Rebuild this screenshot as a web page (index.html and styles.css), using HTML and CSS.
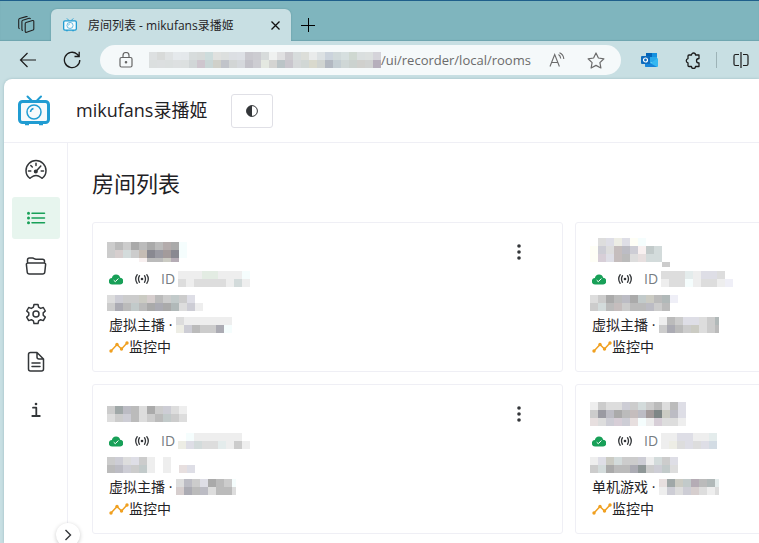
FILE: index.html
```html
<!DOCTYPE html>
<html lang="zh-CN">
<head>
    <meta charset="UTF-8">
    <meta name="viewport" content="width=device-width, initial-scale=1.0">
    <title>房间列表 - mikufans录播姬</title>
    <link rel="stylesheet" href="styles.css">
    <script src="script.js" defer></script>
</head>
<body>
    <!-- Shared icons -->
    <svg class="sprite" aria-hidden="true">
        <symbol id="tv" viewBox="0 0 32 32">
            <path d="M9.500 1.500l4.500 4.500M23 1.500l-4.500 4.500" fill="none" stroke="currentColor" stroke-width="2" stroke-linecap="round"/>
            <rect x="1.500" y="6.500" width="29" height="21" rx="3" fill="#f5fafc" stroke="currentColor" stroke-width="3"/>
            <path d="M7 29h4M21 29h4" stroke="currentColor" stroke-width="2.500"/>
            <circle cx="16" cy="17" r="7" fill="none" stroke="currentColor" stroke-width="1.500"/>
            <path d="M12.500 17a4 4 0 0 1 3-3.500" fill="none" stroke="currentColor" stroke-width="1.500"/>
        </symbol>
        <symbol id="cloud" viewBox="0 0 14 11">
            <path d="M3.300 10.500A3.200 3.200 0 0 1 2.900 4a4.200 4.200 0 0 1 8.200-.2A3.300 3.300 0 0 1 10.800 10.500z" fill="#18a058"/>
            <path d="M4.700 6.200l1.600 1.500 3.100-3.200" fill="none" stroke="#fff" stroke-width="1"/>
        </symbol>
        <symbol id="live" viewBox="0 0 14 12">
            <g fill="none" stroke="#333639" stroke-width="1.300" stroke-linecap="round">
                <path d="M2.200 1.700q-3 4.300 0 8.600M4.500 2.700q-2 3.300 0 6.600M11.800 1.700q3 4.300 0 8.600M9.500 2.700q2 3.300 0 6.600"/>
            </g>
            <circle cx="7" cy="6" r="1.300" fill="#333639"/>
        </symbol>
        <symbol id="trend" viewBox="0 0 20 12">
            <path d="M2 10l6-6.500 4.500 4.500L18 2" fill="none" stroke="#f0a020" stroke-width="1.500"/>
            <g fill="#f0a020"><circle cx="2" cy="10" r="1.700"/><circle cx="8" cy="3.500" r="1.700"/><circle cx="12.500" cy="8" r="1.700"/><circle cx="18" cy="2" r="1.700"/></g>
        </symbol>
        <symbol id="dots" viewBox="0 0 4 16">
            <circle cx="2" cy="2" r="1.800"/><circle cx="2" cy="8" r="1.800"/><circle cx="2" cy="14" r="1.800"/>
        </symbol>
    </svg>

    <div class="tab-strip">
        <button class="workspaces" aria-label="Workspaces">
            <svg width="18" height="18" viewBox="0 0 18 18" fill="none" stroke="#222" stroke-width="1.100" stroke-linejoin="round">
                <path d="M9 6.500l6.500-2q1.300-.3 1.300 1v7.500q0 .8-.8 1.100l-6.300 2.200q-1.500.4-1.500-1V7.700q0-.9.800-1.200z"/>
                <path d="M13.500 3q-.3-1-1.400-.7L5.800 4.200q-.9.300-.9 1.200v8q0 1 1 1M10.500 1q-.4-.6-1.300-.4L2.600 2.500q-.9.300-.9 1.200v7.800q0 1 1 1.200"/>
            </svg>
        </button>
        <div class="tab">
            <svg class="favicon" width="14" height="14"><use href="#tv"/></svg>
            <span class="tab-title">房间列表 - mikufans录播姬</span>
            <button class="tab-close" aria-label="Close tab">
                <svg width="9" height="9" viewBox="0 0 9 9" stroke="#111" stroke-width="1.300"><path d="M.5.5l8 8M8.500.5l-8 8"/></svg>
            </button>
        </div>
        <button class="new-tab" aria-label="New tab">
            <svg width="14" height="14" viewBox="0 0 14 14" stroke="#000" stroke-width="1"><path d="M7.500 0v14M0 7.500h14"/></svg>
        </button>
    </div>

    <div class="toolbar">
        <button aria-label="Back">
            <svg width="18" height="16" viewBox="0 0 18 16" fill="none" stroke="#1b1b1b" stroke-width="1.200"><path d="M8.500 1L1.500 8l7 7M1.500 8H17"/></svg>
        </button>
        <button aria-label="Refresh">
            <svg width="18" height="18" viewBox="0 0 18 18" fill="none" stroke="#1b1b1b" stroke-width="1.300"><path d="M16.800 9A7.700 7.700 0 1 1 14.200 3.200L16 5M16.200.8V5.500H11.500"/></svg>
        </button>
        <div class="address">
            <svg width="14" height="16" viewBox="0 0 14 16" fill="none" stroke="#666" stroke-width="1.200"><rect x="1" y="5.500" width="12" height="9.500" rx="1.500"/><path d="M4 5.500V3.500a3 3 0 0 1 6 0v2"/><circle cx="7" cy="10.300" r=".7" fill="#666"/></svg>
            <svg class="mosaic" data-cells="dde0e1 d8dad9 dfe2e3 e5e9ec e4e8eb d7dcdc d6dad9 cddcdc e0e1df dcdfde dcdfe3 dde0e5 c9c8ce ccccd1 d7dbdb eff1f0 e0e0e1 cdcbcf d7dcdc dcded9 e9ebeb dce1e3 cbd3dc d0d9da d6dfdf cfd8d1 dadfdf dce0df d5d4da/dbdfdf dcdfe0 dbdfdf dde0e1 dce0e0 d1d6d7 cec6ce c9d6d6 d0d0c9 c1c4ca d2d5d5 d5d8dc c3c2c9 cdcdd2 e4e8e1 d4d4d2 bbc4c7 c9c6cd d6d9da d1d7d5 d9d9cd d0d4d1 b2b8c1 c4ced3 cfd7d6 cbd2cf d0d0cd d0d2d1 b6afbc"></svg>
            <span class="url">/ui/recorder/local/rooms</span>
            <button aria-label="Read aloud">
                <svg width="16" height="16" viewBox="0 0 16 16" fill="none" stroke="#6b6b6b" stroke-width="1.100"><path d="M1 14.500L5.700 2.500l4.700 12M2.700 10.500h6M9.500 2.500q2 1.200 2.200 4M10.500.7q4 1.500 4.300 6.300"/></svg>
            </button>
            <button aria-label="Add to favorites">
                <svg width="18" height="17" viewBox="0 0 18 17" fill="none" stroke="#6b6b6b" stroke-width="1.200" stroke-linejoin="round"><path d="M9 1l2.400 5 5.500.8-4 3.800 1 5.400L9 13.400 4.100 16l1-5.400-4-3.800L6.600 6z"/></svg>
            </button>
        </div>
        <button aria-label="Outlook">
            <svg width="17" height="16" viewBox="0 0 17 16"><path d="M5 1h11v9H5z" fill="#28a8ea"/><path d="M5 1h6v4H5z" fill="#0364b8"/><path d="M11 1h5v4h-5z" fill="#1490df"/><path d="M4 7l6.500 3.500L17 6v8q0 1-1 1H5q-1 0-1-1z" fill="#35b8f1"/><path d="M4 8l12 7H5q-1 0-1-1z" fill="#1784d9"/><rect y="4" width="9" height="8" rx="1" fill="#0f6cbd"/><circle cx="4.500" cy="8" r="2" fill="none" stroke="#fff" stroke-width="1.200"/></svg>
        </button>
        <button aria-label="Extensions">
            <svg width="16" height="17" viewBox="0 0 16 17" fill="none" stroke="#1b1b1b" stroke-width="1.300" stroke-linejoin="round"><path d="M4 3h2.500a2 2 0 0 1 4 0H14v3.500q-2.500 0-2.500 2.200t2.500 2.300V14.500h-3.500a2 2 0 0 1-4 0H4q-1 0-1-1v-2.600a2.200 2.200 0 0 1 0-4.300V4q0-1 1-1z"/></svg>
        </button>
        <span class="divider"></span>
        <button aria-label="Split screen">
            <svg width="16" height="16" viewBox="0 0 16 16" fill="none" stroke="#1b1b1b" stroke-width="1.200"><path d="M6 2.500H2.500q-1.500 0-1.500 1.500v8q0 1.500 1.500 1.500H6M10 2.500h3.500q1.500 0 1.500 1.500v8q0 1.500-1.500 1.500H10M8 0v16"/></svg>
        </button>
    </div>

    <div class="app">
        <header class="app-header">
            <svg class="logo" width="32" height="32"><use href="#tv"/></svg>
            <span class="app-name">mikufans录播姬</span>
            <button class="theme-btn" aria-label="Theme">
                <svg width="12" height="12" viewBox="0 0 12 12"><circle cx="6" cy="6" r="5.400" fill="#fff" stroke="#333639"/><path d="M6 .5a5.500 5.500 0 0 0 0 11z" fill="#333639"/></svg>
            </button>
        </header>

        <div class="app-body">
            <nav class="sidebar">
                <a href="#dashboard" aria-label="Dashboard">
                    <svg viewBox="0 0 22 22"><path d="M4.500 19Q1 16.500 1 11.500a10 10 0 0 1 20 0q0 5-3.500 7.500-1 .4-1.500-.5-5-3.800-10 0-.5.900-1.500.5z"/><path d="M11 4.300v2.200M5.800 6.500l1.500 1.500M3.500 12h2.300M16.200 12h2.300M15.800 7l-4.500 5"/><circle cx="10.800" cy="12.500" r="1.300" fill="currentColor"/></svg>
                </a>
                <a href="#rooms" class="active" aria-label="Rooms">
                    <svg viewBox="0 0 22 22"><path d="M7 6.200h12.500M7 11h12.500M7 15.800h12.500"/><path d="M3.500 6.200h.01M3.500 11h.01M3.500 15.800h.01" stroke-width="3"/></svg>
                </a>
                <a href="#files" aria-label="Files">
                    <svg viewBox="0 0 22 22"><path d="M2.500 8V5q0-2 2-2h3q1 0 1.700.7.800.6 1.800.6h6.500q2 0 2 2V8M3 8h16q1.800 0 1.600 1.700l-.8 7.300q-.2 2-2.200 2H4.400q-2 0-2.200-2l-.8-7.300Q1.200 8 3 8z"/></svg>
                </a>
                <a href="#settings" aria-label="Settings">
                    <svg viewBox="0 0 22 22"><path d="M9 1.500h4l.6 2.700 2 1.200 2.700-.9 2 3.500-2.100 1.900v2.300l2.100 1.900-2 3.500-2.700-.9-2 1.200-.6 2.700H9l-.6-2.700-2-1.200-2.700.9-2-3.500 2.100-1.900V9.900L1.700 8l2-3.500 2.700.9 2-1.200z"/><circle cx="11" cy="11" r="3"/></svg>
                </a>
                <a href="#logs" aria-label="Logs">
                    <svg viewBox="0 0 22 22"><path d="M5.500 1.500H12L18.500 8v10q0 2-2 2h-11q-2 0-2-2V3.500q0-2 2-2zM12 1.500V6q0 2 2 2h4.500M7 12h8M7 15.500h8"/></svg>
                </a>
                <a href="#about" aria-label="About">
                    <svg viewBox="0 0 22 22"><path d="M8 8.700h3.300V17M7.300 17h7.500" stroke-width="1.800"/><circle cx="11" cy="5" r="1.300" fill="currentColor" stroke="none"/></svg>
                </a>
                <button class="sidebar-toggle" aria-label="Expand menu">
                    <svg width="8" height="12" viewBox="0 0 8 12" fill="none" stroke="#333639" stroke-width="1.400"><path d="M1.500 1l5 5-5 5"/></svg>
                </button>
            </nav>

            <main class="content">
                <h1>房间列表</h1>
                <div class="rooms">
                    <section class="room">
                        <div class="room-head">
                            <svg class="mosaic" data-height="20" data-cells="ccc bbb ccc aaa bbb aaa bbb baa aaa eff/ccc dcc cdd ccc cba 889 99a a99 889 eff/- - - - fee bbb bbb ccb bab fff"></svg>
                            <button class="more" aria-label="More"><svg width="4" height="16"><use href="#dots"/></svg></button>
                        </div>
                        <div class="room-id">
                            <svg width="14" height="11"><use href="#cloud"/></svg>
                            <svg width="14" height="12"><use href="#live"/></svg>
                            <span>ID</span>
                            <svg class="mosaic" data-cells="eee eee eee ded ded eee eee eee eff/ddd eee ddd ddd ddd ddd eee cdd eee"></svg>
                        </div>
                        <div class="room-line masked"><svg class="mosaic" data-cells="ddd ccd ccc ccc ccb dcc bbb ccc bcc ccc dde -/ccc aab bbb bcc bbb aaa aab aaa abb ddd ccd eee"></svg></div>
                        <div class="room-line">虚拟主播 · <svg class="mosaic" data-cells="ddd eee eee eee eee eee eee/eed ccd bbb ccc ccc aab eff"></svg></div>
                        <div class="room-line"><svg width="20" height="12"><use href="#trend"/></svg>监控中</div>
                    </section>

                    <section class="room">
                        <div class="room-head">
                            <svg class="mosaic" data-height="29" data-cells="fff ddd dde eed dde ffe eff - - -/ffe ccd ddd cbb bbc ccd fee bcc cdd -/ffe dcd dde cbb bbb ddd edd cdd cdd -/- - - - - - - - fff ccc"></svg>
                            <button class="more" aria-label="More"><svg width="4" height="16"><use href="#dots"/></svg></button>
                        </div>
                        <div class="room-id">
                            <svg width="14" height="11"><use href="#cloud"/></svg>
                            <svg width="14" height="12"><use href="#live"/></svg>
                            <span>ID</span>
                            <svg class="mosaic" data-cells="ddd ddd ddd dee eee dde dde ddd fff/eee ddd ddd eff eee ddd ddd eee eef"></svg>
                        </div>
                        <div class="room-line masked"><svg class="mosaic" data-cells="ddd ccc aaa bbb bbc aaa bcc ccb bbb abb eef/ccc cdd bbb cbb ccc bbb bbb bbc ccc bbb fff"></svg></div>
                        <div class="room-line">虚拟主播 · <svg class="mosaic narrow" data-width="60" data-cells="eee bbb ccc dde dde ddd ccc abb dee/ccc aab bbb ccc ccb ddd ccc bbb eef"></svg></div>
                        <div class="room-line"><svg width="20" height="12"><use href="#trend"/></svg>监控中</div>
                    </section>

                    <section class="room">
                        <div class="room-head">
                            <svg class="mosaic" data-cells="ccc 9aa bbc bbb ddd aaa ccc ccd ddd eee/ddd ccc ccd bbb ddd ccc bbb bcc ccc ddd"></svg>
                            <button class="more" aria-label="More"><svg width="4" height="16"><use href="#dots"/></svg></button>
                        </div>
                        <div class="room-id">
                            <svg width="14" height="11"><use href="#cloud"/></svg>
                            <svg width="14" height="12"><use href="#live"/></svg>
                            <span>ID</span>
                            <svg class="mosaic" data-cells="fff eff eee eee eee eee eee eee fff/eed dde cdd ddd ddd dee eee ccc eee"></svg>
                        </div>
                        <div class="room-line masked"><svg class="mosaic" data-cells="ccc ccd ddd dde ccc eee - eee - fff fff/bbb bbc ccd ccc bcc eee - eee - edd dde"></svg></div>
                        <div class="room-line">虚拟主播 · <svg class="mosaic" data-width="60" data-cells="ddd bbc ccc dde aaa bbb ccc eff/dcc aab bbb bbc ddd bbb bbb ddd"></svg></div>
                        <div class="room-line"><svg width="20" height="12"><use href="#trend"/></svg>监控中</div>
                    </section>

                    <section class="room">
                        <div class="room-head">
                            <svg class="mosaic" data-cells="eee ccc ddd ddd ccd ccc cdd ccc bbb ddd bbb dde/ccc 99a bbc aaa bbb cbb bbc a99 788 ccb bbc dde/edd ddd ccd dcd ccd edd eff eee dcd ddd ddd eee"></svg>
                            <button class="more" aria-label="More"><svg width="4" height="16"><use href="#dots"/></svg></button>
                        </div>
                        <div class="room-id">
                            <svg width="14" height="11"><use href="#cloud"/></svg>
                            <svg width="14" height="12"><use href="#live"/></svg>
                            <span>ID</span>
                            <svg class="mosaic" data-cells="eee eee dde dde eee eee dee/eee eed ddd dde ddd dde cde"></svg>
                        </div>
                        <div class="room-line masked"><svg class="mosaic" data-cells="eee dde ccb cdd ccc ccc ccd eee cdd ccc dde/ccc cdd aaa bbb bbb aab 899 ccc ccd bcc ddd"></svg></div>
                        <div class="room-line">单机游戏 · <svg class="mosaic" data-width="60" data-cells="edd 9aa ccb bcc bab bbb abb dee/eee ccd ddd ccd dcc ddd eee ddd"></svg></div>
                        <div class="room-line"><svg width="20" height="12"><use href="#trend"/></svg>监控中</div>
                    </section>
                </div>
            </main>
        </div>
    </div>
</body>
</html>
```
FILE: styles.css
```css
* {
    box-sizing: border-box;
}

body {
    display: flex;
    flex-direction: column;
    height: 100vh;
    margin: 0;
    overflow: hidden;
    background-color: #c8dfe3;
    color: #1f2225;
    font-family: "Open Sans", "Noto Sans CJK SC", sans-serif;
    font-size: 14px;
}

button {
    display: flex;
    align-items: center;
    justify-content: center;
    flex-shrink: 0;
    padding: 0;
    border: none;
    background: none;
    cursor: pointer;
}

svg {
    flex-shrink: 0;
}

.sprite {
    position: absolute;
    width: 0;
    height: 0;
}

/* Browser tabs */
.tab-strip {
    display: flex;
    flex-shrink: 0;
    height: 41px;
    padding-top: 8px;
    border-top: 1px solid #1f5f8b;
    background-color: #7fb5be;
    box-shadow: inset 0 -1px 1px #6fa5ae;
}

.workspaces {
    width: 51px;
}

.tab {
    display: flex;
    align-items: center;
    width: 240px;
    padding: 0 11px 0 12px;
    border-radius: 6px 6px 0 0;
    background-color: #c8dfe3;
    box-shadow: 0 0 2px #5f949d;
    clip-path: inset(-3px -3px 0 -3px);
}

.favicon, .logo {
    color: #209cd2;
}

.tab-title {
    flex: 1;
    margin-left: 11px;
    font-size: 12px;
    white-space: nowrap;
}

.new-tab {
    width: 34px;
}

/* Browser toolbar */
.toolbar {
    display: flex;
    align-items: center;
    flex-shrink: 0;
    height: 38px;
    padding-left: 19px;
}

.toolbar > button {
    width: 18px;
    margin-right: 26px;
}

.toolbar > .address {
    display: flex;
    align-items: center;
    flex: 1;
    min-width: 0;
    height: 30px;
    margin: 0 19px 0 -7px;
    padding: 0 16px 0 19px;
    border-radius: 15px;
    background-color: #f5f9fa;
}

.address .mosaic {
    margin-left: 16px;
    filter: none;
}

.url {
    flex: 1;
    color: #6b6b6b;
    font-size: 13px;
    white-space: nowrap;
}

.address button {
    margin-left: 22px;
}

.address .url + button {
    margin-left: 14px;
}

.toolbar > .divider {
    width: 1px;
    height: 16px;
    margin: 0 15px 0 -12px;
    background-color: #9db3b7;
}

.toolbar > button:last-child {
    margin-right: 9px;
}

/* App frame */
.app {
    display: flex;
    flex-direction: column;
    flex: 1;
    min-height: 0;
    margin-left: 4px;
    border-top-left-radius: 8px;
    background-color: #fff;
    box-shadow: 0 0 3px #9dbcc2;
}

.app-header {
    display: flex;
    align-items: center;
    height: 64px;
    padding-left: 14px;
    border-bottom: 1px solid #efeff5;
}

.app-name {
    margin-left: 26px;
    padding-bottom: 4px;
    font-size: 18px;
}

.theme-btn {
    width: 42px;
    height: 34px;
    margin-left: 24px;
    border: 1px solid #e0e0e6;
    border-radius: 3px;
}

.app-body {
    display: flex;
    flex: 1;
    min-height: 0;
}

.sidebar {
    position: relative;
    display: flex;
    flex-direction: column;
    gap: 6px;
    flex-shrink: 0;
    width: 64px;
    padding: 6px 7px 0 8px;
    border-right: 1px solid #efeff5;
}

.sidebar a {
    display: flex;
    align-items: center;
    justify-content: center;
    height: 42px;
    border-radius: 3px;
    color: #333639;
}

.sidebar a svg {
    width: 22px;
    height: 22px;
    fill: none;
    stroke: currentColor;
    stroke-width: 1.5px;
    stroke-linecap: round;
    stroke-linejoin: round;
}

.sidebar a.active {
    background-color: #e7f5ee;
    color: #18a058;
}

/* Sits over the sidebar border */
.sidebar-toggle {
    position: absolute;
    right: -13px;
    bottom: -4px;
    width: 24px;
    height: 24px;
    border-radius: 50%;
    background-color: #fff;
    box-shadow: 0 1px 4px rgba(0, 0, 0, 0.2);
}

/* Room list */
.content {
    flex: 1;
    min-width: 0;
    padding: 24px;
    overflow: hidden;
}

h1 {
    margin: 0 0 22px;
    font-size: 22px;
    font-weight: 400;
    line-height: 33px;
}

.rooms {
    display: grid;
    grid-template-columns: repeat(2, minmax(471px, 1fr));
    gap: 12px;
}

.room {
    padding: 15px 16px 13px;
    border: 1px solid #efeff5;
    border-radius: 3px;
    line-height: 22px;
}

.room-head, .room-id, .room-line {
    display: flex;
    align-items: center;
    height: 22px;
    white-space: pre;
}

.room-head {
    justify-content: space-between;
    height: 28px;
}

/* Blurred-out names and numbers */
.mosaic {
    filter: saturate(0.5);
}

.room-head .mosaic, .masked .mosaic {
    margin-left: -2px;
}

.more {
    width: 34px;
    margin-right: 10px;
    fill: #333639;
}

.room-id {
    gap: 12px;
    height: 26px;
    color: #767c82;
}

.room-id .mosaic {
    margin-left: -9px;
}
```
FILE: script.js
```js
var CELL = 8;

// Fill each mosaic with its colour cells: rows split by "/", "-" leaves a gap
function drawMosaic(svg) {
    var rows = svg.dataset.cells.split("/");
    var columns = 0;
    rows.forEach(function (row, y) {
        var cells = row.split(" ");
        columns = Math.max(columns, cells.length);
        cells.forEach(function (color, x) {
            if (color === "-") return;
            var rect = document.createElementNS("http://www.w3.org/2000/svg", "rect");
            rect.setAttribute("x", x * CELL);
            rect.setAttribute("y", y * CELL);
            rect.setAttribute("width", CELL);
            rect.setAttribute("height", CELL);
            rect.setAttribute("fill", "#" + color);
            svg.appendChild(rect);
        });
    });
    svg.setAttribute("width", svg.dataset.width || columns * CELL);
    svg.setAttribute("height", svg.dataset.height || rows.length * CELL);
}

document.querySelectorAll(".mosaic").forEach(drawMosaic);
```
